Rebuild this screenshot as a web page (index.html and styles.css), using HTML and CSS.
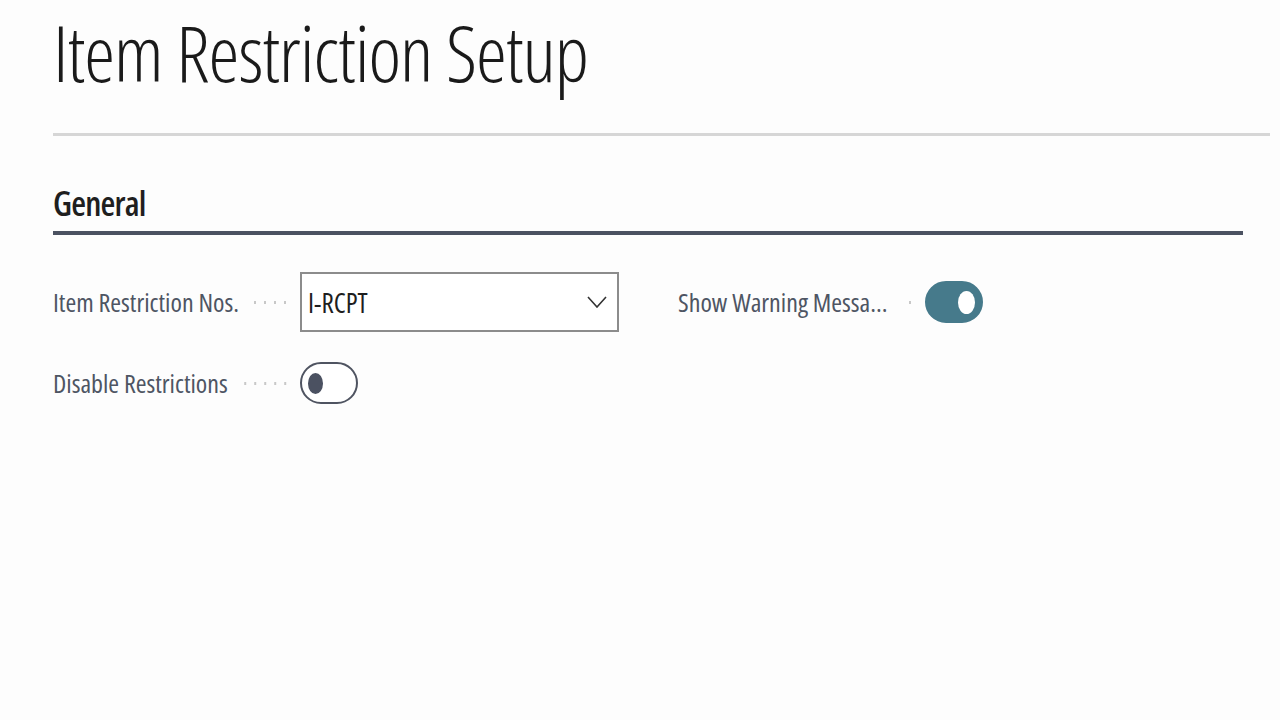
FILE: index.html
```html
<!DOCTYPE html>
<html lang="en">
<head>
  <meta charset="UTF-8" />
  <meta name="viewport" content="width=device-width, initial-scale=1.0"/>
  <title>Item Restriction Setup</title>
  <link rel="stylesheet" href="styles.css">
</head>
<body>

  <div class="page">
    <h1 class="page-title">Item Restriction Setup</h1>
    <div class="title-rule"></div>

    <h2 class="section-title">General</h2>
    <div class="section-rule"></div>

    <div class="fields">
      <div class="field">
        <label class="field-label">Item Restriction Nos.</label>
        <div class="lookup">
          <span class="lookup-value">I-RCPT</span>
          <svg class="chevron" width="20" height="12" viewBox="0 0 20 12">
            <path d="M1 1 L10 11 L19 1" fill="none" stroke="#333" stroke-width="1.6"/>
          </svg>
        </div>
      </div>

      <div class="field">
        <label class="field-label">Show Warning Messa...</label>
        <div class="toggle on"><span class="knob"></span></div>
      </div>

      <div class="field">
        <label class="field-label">Disable Restrictions</label>
        <div class="toggle"><span class="knob"></span></div>
      </div>
    </div>
  </div>

</body>
</html>
```

FILE: styles.css
```css
body {
  margin: 0;
  background: #fdfdfd;
  font-family: "Open Sans", Arial, sans-serif;
  font-stretch: 75%;
  color: #222;
}
.page {
  padding: 0 10px 0 53px;
}
.page-title {
  margin: 0;
  padding-top: 2px;
  font-size: 78px;
  font-weight: 300;
  letter-spacing: -1px;
  line-height: 100px;
  color: #1a1a1a;
  white-space: nowrap;
}
.title-rule {
  height: 3px;
  background: #d6d6d6;
  margin-top: 31px;
}
.section-title {
  margin: 0;
  padding-top: 44px;
  font-size: 34px;
  font-weight: 600;
  letter-spacing: -0.8px;
  line-height: 46px;
  color: #1f1f1f;
}
.section-rule {
  height: 4px;
  background: #4b5261;
  margin: 5px 27px 0 0;
}
.fields {
  display: grid;
  grid-template-columns: 625px 560px;
  row-gap: 30px;
  margin-top: 37px;
}
.field {
  display: flex;
  align-items: center;
  min-height: 60px;
}
.field:nth-child(3) {
  min-height: 42px;
}
.field-label {
  width: 247px;
  flex: none;
  display: flex;
  align-items: center;
  font-size: 26px;
  color: #4e5563;
  white-space: nowrap;
  overflow: hidden;
}
.field-label::after {
  content: "";
  flex: 1;
  height: 3px;
  margin: 0 10px;
  background-image: radial-gradient(circle, #c8c8c8 1.2px, transparent 1.5px);
  background-size: 10px 3px;
  background-position: right;
}
.field:nth-child(2) .field-label::after {
  margin-right: 8px;
  background-size: 14px 3px;
  background-repeat: no-repeat;
}
.lookup {
  box-sizing: border-box;
  width: 319px;
  height: 60px;
  border: 2px solid #8c8c8c;
  display: flex;
  align-items: center;
  justify-content: space-between;
  padding: 0 10px 0 6px;
  background: #fff;
}
.lookup-value {
  font-size: 27px;
  color: #1e1e1e;
}
.toggle {
  box-sizing: border-box;
  width: 58px;
  height: 42px;
  border: 2px solid #4f5461;
  border-radius: 21px;
  display: flex;
  align-items: center;
  padding: 0 6px;
  background: #fff;
}
.toggle .knob {
  width: 15px;
  height: 21px;
  border-radius: 50%;
  background: #4b5161;
}
.toggle.on {
  background: #467a8b;
  border-color: #467a8b;
  justify-content: flex-end;
}
.toggle.on .knob {
  background: #fff;
  width: 17px;
  height: 23px;
}
```
